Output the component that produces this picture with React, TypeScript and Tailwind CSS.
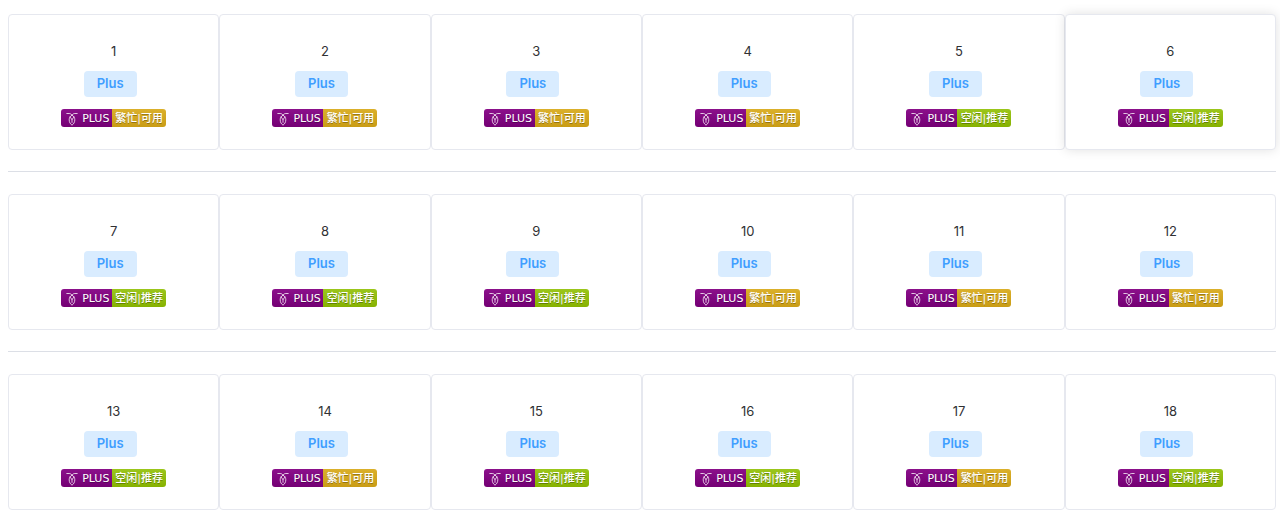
import clsx from 'clsx';

type Status = 'busy' | 'idle';

interface Account {
  id: number;
  status: Status;
}

const STATUS_LABEL: Record<Status, string> = {
  busy: '繁忙|可用',
  idle: '空闲|推荐',
};

const STATUS_CLASS: Record<Status, string> = {
  busy: 'from-[#dbb02b] to-[#c99c14]',
  idle: 'from-[#9bc61b] to-[#86b100]',
};

const ROWS: Status[][] = [
  ['busy', 'busy', 'busy', 'busy', 'idle', 'idle'],
  ['idle', 'idle', 'idle', 'busy', 'busy', 'busy'],
  ['idle', 'busy', 'idle', 'idle', 'busy', 'idle'],
];

const HIGHLIGHTED_ID = 6;

// Cockroach logo on the left of the status badge
function RoachIcon() {
  return (
    <svg
      viewBox="0 0 12 14"
      className="h-[14px] w-3 shrink-0"
      fill="none"
      stroke="#fff"
      strokeOpacity="0.85"
      strokeWidth="0.9"
      strokeLinecap="round"
      aria-hidden="true"
    >
      <path d="M0.8 1.5H3.2C4.6 1.5 5.2 2.2 6 3.2C6.8 2.2 7.4 1.5 8.800 1.5H11.2" />
      <path d="M6 3.2C4 4.200 3.2 5.800 3.2 7.800C3.2 10.2 4.300 12 6 13.2C7.700 12 8.800 10.2 8.800 7.800C8.800 5.800 8 4.200 6 3.2Z" />
      <path d="M4 5L6 7.600L8 5M6 7.600V10.400" />
    </svg>
  );
}

function StatusBadge({ status }: { status: Status }) {
  return (
    <div className="flex h-[18px] overflow-hidden rounded-[3px] font-['DejaVu_Sans','Noto_Sans_CJK_SC',sans-serif] text-[11px] leading-4 text-white [text-shadow:0_1px_0_rgba(1,1,1,0.3)]">
      <span className="flex w-[51px] items-center gap-1 bg-linear-to-b from-[#8b108b] to-[#740074] pt-px pl-[5px]">
        <RoachIcon />
        PLUS
      </span>
      <span
        className={clsx(
          'flex w-[54px] items-center justify-center bg-linear-to-b pt-px font-medium whitespace-nowrap',
          STATUS_CLASS[status],
        )}
      >
        {STATUS_LABEL[status]}
      </span>
    </div>
  );
}

function AccountCard({ account }: { account: Account }) {
  return (
    <div
      className={clsx(
        'flex h-[136px] flex-col items-center rounded border border-[#e6e8ef] bg-white pt-[26px]',
        account.id === HIGHLIGHTED_ID && 'shadow-[0_0_12px_rgba(0,0,0,0.12)]',
      )}
    >
      <span className="text-[13px] leading-5 text-[#303133]">{account.id}</span>
      <span className="mt-[10px] mr-[7px] h-[26px] rounded bg-[#d9ecff] px-[13px] text-[13px] leading-6 font-semibold text-[#409eff]">
        Plus
      </span>
      <div className="mt-3">
        <StatusBadge status={account.status} />
      </div>
    </div>
  );
}

export default function App() {
  return (
    <main className="bg-white pt-[14px] pr-1 pl-2 font-['Inter',sans-serif]">
      {ROWS.map((row, rowIndex) => (
        <section key={rowIndex}>
          {rowIndex > 0 && <hr className="mt-[21px] mb-[22px] border-[#dcdfe6]" />}
          <div className="grid grid-cols-6">
            {row.map((status, i) => {
              const id = rowIndex * row.length + i + 1;
              return <AccountCard key={id} account={{ id, status }} />;
            })}
          </div>
        </section>
      ))}
    </main>
  );
}
